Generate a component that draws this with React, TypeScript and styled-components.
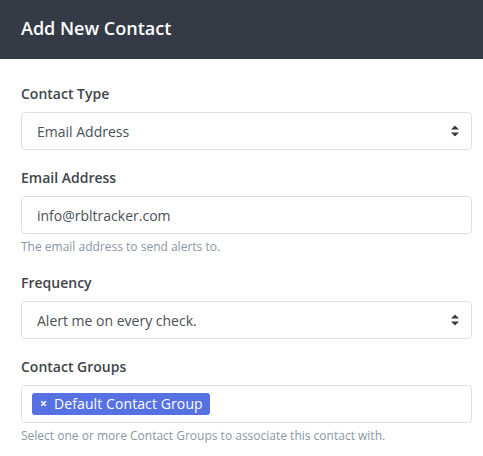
import React from "react";
import styled, { createGlobalStyle } from "styled-components";

const Global = createGlobalStyle`
  html, body { margin: 0; padding: 0; background: #ffffff; }
  body { font-family: "Open Sans", "Noto Sans", sans-serif; -webkit-font-smoothing: antialiased; }
  * { box-sizing: border-box; }
`;

const Modal = styled.div`
  width: 483px;
  height: 456px;
  background: #ffffff;
  overflow: hidden;
`;

const Header = styled.div`
  height: 59px;
  background: #343a46;
  display: flex;
  align-items: center;
  padding: 0 21px 4px;
`;

const Title = styled.h2`
  margin: 0;
  font-size: 18px;
  font-weight: 600;
  color: #ffffff;
  line-height: 24px;
`;

const Body = styled.div`
  padding: 25px 11px 0 21px;
  display: flex;
  flex-direction: column;
`;

const Group = styled.div`
  display: flex;
  flex-direction: column;
  margin-bottom: 18px;
`;

const Label = styled.label`
  font-size: 14px;
  font-weight: 600;
  color: #3f444b;
  line-height: 20px;
  margin-bottom: 8px;
`;

const FieldWrap = styled.div`
  position: relative;
`;

const Select = styled.select`
  appearance: none;
  -webkit-appearance: none;
  width: 100%;
  height: 38px;
  border: 1px solid #dee2e6;
  border-radius: 4px;
  background: #ffffff;
  padding: 0 30px 0 15px;
  font-family: inherit;
  font-size: 14px;
  color: #495057;
  outline: none;
`;

const Input = styled.input`
  width: 100%;
  height: 38px;
  border: 1px solid #dee2e6;
  border-radius: 4px;
  background: #ffffff;
  padding: 0 15px;
  font-family: inherit;
  font-size: 14px;
  color: #495057;
  outline: none;
`;

const Caret = styled.svg`
  position: absolute;
  right: 13px;
  top: 50%;
  transform: translateY(-50%);
  pointer-events: none;
`;

const Help = styled.div`
  margin-top: 4px;
  font-size: 12px;
  line-height: 17px;
  color: #8a97a6;
`;

const TagBox = styled.div`
  height: 38px;
  border: 1px solid #dee2e6;
  border-radius: 4px;
  display: flex;
  align-items: center;
  padding: 0 10px;
  gap: 4px;
`;

const Tag = styled.span`
  display: inline-flex;
  align-items: center;
  height: 22px;
  padding: 0 7px 0 8px;
  background: #5671e2;
  border-radius: 3px;
  color: #ffffff;
  font-size: 14px;
  letter-spacing: 0.1px;
  line-height: 22px;
  gap: 7px;
`;

const TagRemove = styled.span`
  font-size: 12px;
  font-weight: 700;
  line-height: 1;
`;

const Arrows = () => (
  <Caret width="8" height="11" viewBox="0 0 8 11">
    <path d="M4 0 L8 4 L0 4 Z" fill="#343a40" />
    <path d="M0 7 L8 7 L4 11 Z" fill="#343a40" />
  </Caret>
);

export default function App() {
  return (
    <>
      <Global />
      <Modal>
        <Header>
          <Title>Add New Contact</Title>
        </Header>
        <Body>
          <Group>
            <Label>Contact Type</Label>
            <FieldWrap>
              <Select defaultValue="email">
                <option value="email">Email Address</option>
              </Select>
              <Arrows />
            </FieldWrap>
          </Group>
          <Group>
            <Label>Email Address</Label>
            <Input defaultValue="info@rbltracker.com" />
            <Help>The email address to send alerts to.</Help>
          </Group>
          <Group>
            <Label>Frequency</Label>
            <FieldWrap>
              <Select defaultValue="every">
                <option value="every">Alert me on every check.</option>
              </Select>
              <Arrows />
            </FieldWrap>
          </Group>
          <Group>
            <Label>Contact Groups</Label>
            <TagBox>
              <Tag>
                <TagRemove>×</TagRemove>
                Default Contact Group
              </Tag>
            </TagBox>
            <Help>Select one or more Contact Groups to associate this contact with.</Help>
          </Group>
        </Body>
      </Modal>
    </>
  );
}
